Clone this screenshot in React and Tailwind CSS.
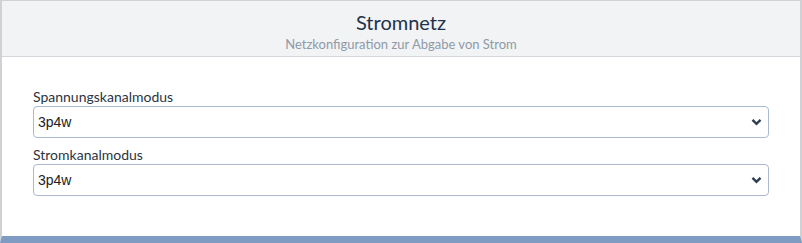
const FIELDS = [
  { id: 'spannung', label: 'Spannungskanalmodus', value: '3p4w' },
  { id: 'strom', label: 'Stromkanalmodus', value: '3p4w' },
]

function Chevron() {
  return (
    <svg
      className="pointer-events-none absolute right-[7px] top-1/2 -translate-y-1/2"
      width="11"
      height="8"
      viewBox="0 0 11 8"
      fill="none"
    >
      <path d="M1.5 1.8 L5.5 5.8 L9.5 1.8" stroke="#2c3e50" strokeWidth="2.4" />
    </svg>
  )
}

export default function App() {
  return (
    <div className="w-[802px] h-[243px] bg-white" style={{ fontFamily: 'Lato, "Noto Sans", sans-serif' }}>
      <div className="h-full flex flex-col border-t border-x-2 border-[#cfd1d4] border-b-[7px] border-b-[#7f9bc2]">
        <div className="h-[56px] shrink-0 bg-[#f2f3f5] border-b border-[#d3d6da] flex flex-col items-center pt-[8px]">
          <h1 className="text-[20px] leading-[26px] text-[#22324a]">Stromnetz</h1>
          <p className="text-[13px] leading-[18px] text-[#8e9aa6]">Netzkonfiguration zur Abgabe von Strom</p>
        </div>

        <div className="flex-1 px-[31px] pt-[31px] flex flex-col gap-[8px]">
          {FIELDS.map(f => (
            <div key={f.id} className="flex flex-col">
              <label htmlFor={f.id} className="text-[14px] leading-[18px] text-[#2b3440]">
                {f.label}
              </label>
              <div className="relative">
                <select
                  id={f.id}
                  defaultValue={f.value}
                  className="w-full h-[32px] appearance-none bg-white border border-[#a9b9cf] rounded-[4px] pl-[4px] text-[14px] text-[#222]"
                  style={{ fontFamily: '"Liberation Sans", Arial, sans-serif' }}
                >
                  <option value="3p4w">3p4w</option>
                  <option value="3p3w">3p3w</option>
                  <option value="1p2w">1p2w</option>
                </select>
                <Chevron />
              </div>
            </div>
          ))}
        </div>
      </div>
    </div>
  )
}
